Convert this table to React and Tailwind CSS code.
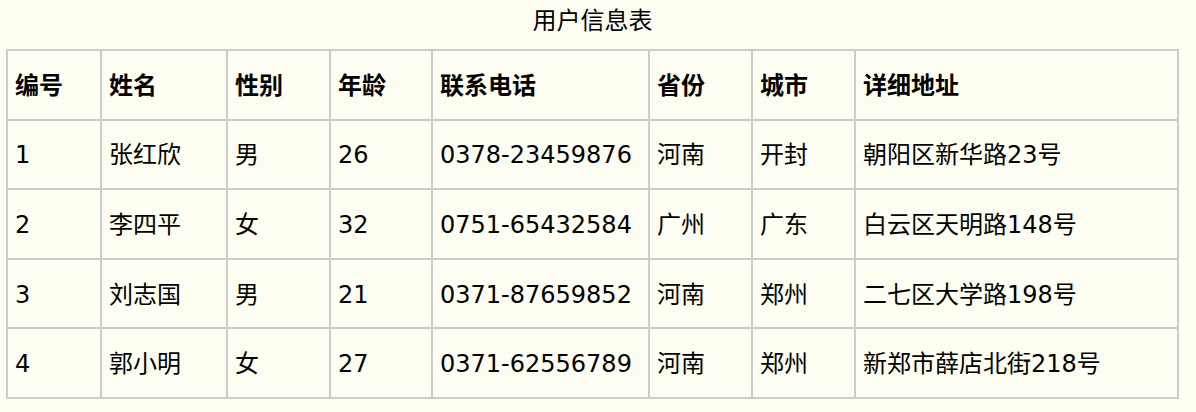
const users = [
  { id: '1', name: '张红欣', sex: '男', age: '26', phone: '0378-23459876', province: '河南', city: '开封', address: '朝阳区新华路23号' },
  { id: '2', name: '李四平', sex: '女', age: '32', phone: '0751-65432584', province: '广州', city: '广东', address: '白云区天明路148号' },
  { id: '3', name: '刘志国', sex: '男', age: '21', phone: '0371-87659852', province: '河南', city: '郑州', address: '二七区大学路198号' },
  { id: '4', name: '郭小明', sex: '女', age: '27', phone: '0371-62556789', province: '河南', city: '郑州', address: '新郑市薛店北街218号' },
];

const headers = ['编号', '姓名', '性别', '年龄', '联系电话', '省份', '城市', '详细地址'];
const cellCls = 'border-2 border-[#cccccc] pl-[7px] pr-1 pt-[2px] h-[69.6px] align-middle whitespace-nowrap';

const App = () => {
  return (
    <div
      className="min-h-[412px] bg-[#fefef2] text-black text-[24px]"
      style={{ fontFamily: '"DejaVu Sans", "Noto Sans CJK SC", sans-serif' }}
    >
      <div className="w-[1173px] ml-[6px]">
        {/* 标题 */}
        <div className="h-[49px] pt-[2px] leading-[38px] text-center">用户信息表</div>

        {/* 表格 */}
        <table className="w-full table-fixed border-collapse">
          <colgroup>
            <col className="w-[94px]" />
            <col className="w-[126px]" />
            <col className="w-[103px]" />
            <col className="w-[102px]" />
            <col className="w-[217px]" />
            <col className="w-[103px]" />
            <col className="w-[103px]" />
            <col />
          </colgroup>
          <thead>
            <tr>
              {headers.map((h) => (
                <th key={h} className={`${cellCls} text-left font-bold`}>
                  {h}
                </th>
              ))}
            </tr>
          </thead>
          <tbody>
            {users.map((u) => (
              <tr key={u.id}>
                <td className={cellCls}>{u.id}</td>
                <td className={cellCls}>{u.name}</td>
                <td className={cellCls}>{u.sex}</td>
                <td className={cellCls}>{u.age}</td>
                <td className={cellCls}>{u.phone}</td>
                <td className={cellCls}>{u.province}</td>
                <td className={cellCls}>{u.city}</td>
                <td className={cellCls}>{u.address}</td>
              </tr>
            ))}
          </tbody>
        </table>
      </div>
    </div>
  );
};

export default App;
